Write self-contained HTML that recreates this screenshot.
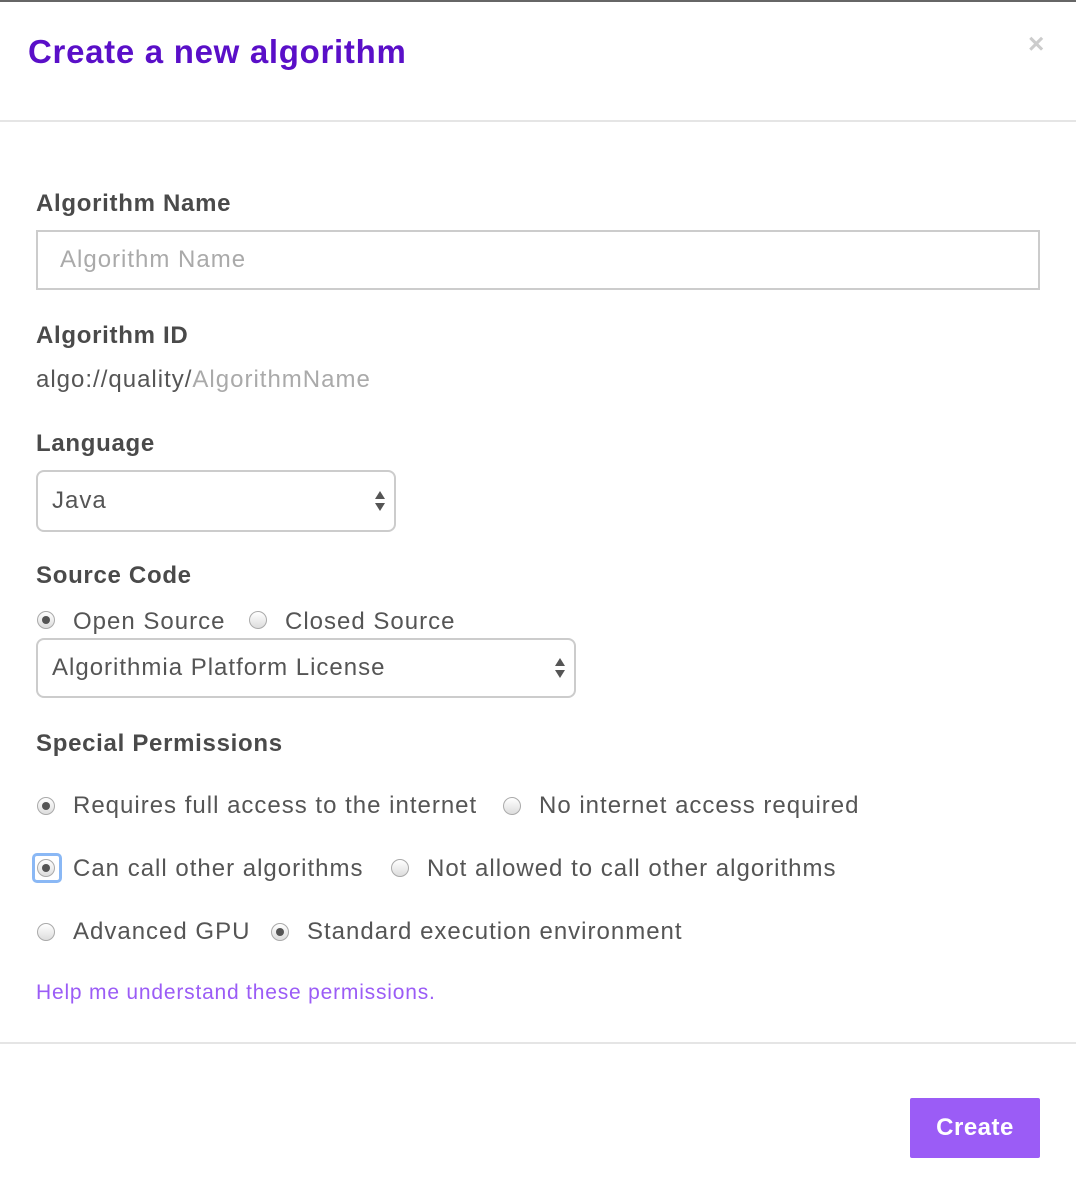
<!DOCTYPE html>
<html><head><meta charset="utf-8"><style>
*{margin:0;padding:0;box-sizing:border-box}
body{width:1076px;height:1192px;background:#fff;font-family:"Liberation Sans",sans-serif;color:#444;position:relative;overflow:hidden}
.a{position:absolute;white-space:nowrap}
.lbl{font-weight:bold;font-size:24px;color:#4a4a4a;letter-spacing:0.7px}
.t{font-size:24px;color:#555;letter-spacing:1px}
.r{position:absolute;width:18px;height:18px;border-radius:50%;border:1px solid #aaa;background:linear-gradient(#fff,#ddd)}
.r.on::after{content:"";position:absolute;left:4px;top:4px;width:8px;height:8px;border-radius:50%;background:#555}
.sel{position:absolute;border:2px solid #ccc;border-radius:8px;background:#fff}
.arr{position:absolute;right:8px;top:50%;transform:translateY(-50%);width:12px;height:24px}
</style></head><body>
<div class="a" style="left:0;top:0;width:1076px;height:2px;background:#666"></div>
<div class="a" style="left:28px;top:33px;font-size:33px;font-weight:bold;color:#5a0fc8;letter-spacing:0.7px">Create a new algorithm</div>
<div class="a" style="left:1028px;top:28px;font-size:28px;font-weight:bold;color:#ccc">×</div>
<div class="a" style="left:0;top:120px;width:1076px;height:2px;background:#e5e5e5"></div>

<div class="a lbl" style="left:36px;top:190px">Algorithm Name</div>
<div class="a" style="left:36px;top:230px;width:1004px;height:60px;border:2px solid #ccc"></div>
<div class="a t" style="left:60px;top:246px;color:#aaa">Algorithm Name</div>

<div class="a lbl" style="left:36px;top:322px">Algorithm ID</div>
<div class="a t" style="left:36px;top:366px">algo://quality/<span style="color:#aaa">AlgorithmName</span></div>

<div class="a lbl" style="left:36px;top:430px">Language</div>
<div class="sel" style="left:36px;top:470px;width:360px;height:62px"><svg class="arr" viewBox="0 0 12 24"><path d="M6 2L11 10H1Z M6 22L11 14H1Z" fill="#555"/></svg></div>
<div class="a t" style="left:52px;top:487px">Java</div>

<div class="a lbl" style="left:36px;top:562px">Source Code</div>
<div class="r on" style="left:37px;top:611px"></div>
<div class="a t" style="left:73px;top:608px">Open Source</div>
<div class="r" style="left:249px;top:611px"></div>
<div class="a t" style="left:285px;top:608px">Closed Source</div>
<div class="sel" style="left:36px;top:638px;width:540px;height:60px"><svg class="arr" viewBox="0 0 12 24"><path d="M6 2L11 10H1Z M6 22L11 14H1Z" fill="#555"/></svg></div>
<div class="a t" style="left:52px;top:654px">Algorithmia Platform License</div>

<div class="a lbl" style="left:36px;top:730px">Special Permissions</div>
<div class="r on" style="left:37px;top:797px"></div>
<div class="a t" style="left:73px;top:792px">Requires full access to the internet</div>
<div class="r" style="left:503px;top:797px"></div>
<div class="a t" style="left:539px;top:792px">No internet access required</div>

<div class="a" style="left:32px;top:853px;width:30px;height:30px;border:3px solid #8ab8f5;border-radius:5px"></div>
<div class="r on" style="left:37px;top:859px"></div>
<div class="a t" style="left:73px;top:855px">Can call other algorithms</div>
<div class="r" style="left:391px;top:859px"></div>
<div class="a t" style="left:427px;top:855px">Not allowed to call other algorithms</div>

<div class="r" style="left:37px;top:923px"></div>
<div class="a t" style="left:73px;top:918px">Advanced GPU</div>
<div class="r on" style="left:271px;top:923px"></div>
<div class="a t" style="left:307px;top:918px">Standard execution environment</div>

<div class="a" style="left:36px;top:981px;font-size:21px;color:#9b5cf6;letter-spacing:0.8px">Help me understand these permissions.</div>

<div class="a" style="left:0;top:1042px;width:1076px;height:2px;background:#e5e5e5"></div>
<div class="a" style="left:910px;top:1098px;width:130px;height:60px;background:#9b5cf6;border-radius:2px;color:#fff;font-size:24px;font-weight:bold;text-align:center;line-height:60px;letter-spacing:0.5px">Create</div>
</body></html>
